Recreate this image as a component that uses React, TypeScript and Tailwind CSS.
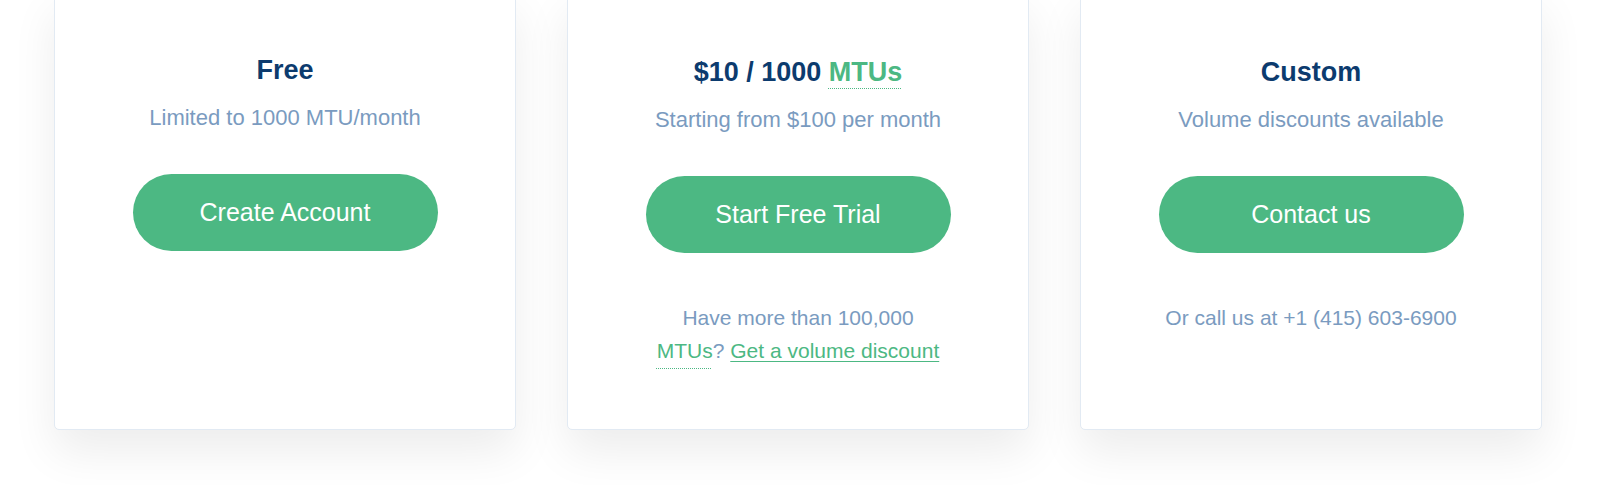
import React from "react";

const font = { fontFamily: '"Liberation Sans", Arial, sans-serif' };

function Button({ label }: { label: string }) {
  return (
    <button className="mt-[40px] flex h-[77px] w-[305px] items-center justify-center rounded-full bg-[#4cb883] text-[25px] text-white">
      {label}
    </button>
  );
}

function Card({ children, pad }: { children: React.ReactNode; pad: string }) {
  return (
    <div
      className={`flex h-[440px] w-[462px] flex-col items-center rounded-[5px] border border-[#e2eaf3] bg-white shadow-[0_22px_45px_rgba(0,0,0,0.075)] ${pad}`}
    >
      {children}
    </div>
  );
}

export default function App() {
  return (
    <div className="h-[485px] w-[1600px] overflow-hidden bg-white" style={font}>
      <div className="-mt-[10px] flex gap-[51px] pl-[54px]">
        <Card pad="pt-[61px]">
          <h2 className="h-[36px] text-[27px] font-bold leading-[36px] text-[#0c3b6e]">Free</h2>
          <p className="mt-[14px] text-[22px] leading-[32px] text-[#7a9bc0]">Limited to 1000 MTU/month</p>
          <Button label="Create Account" />
        </Card>
        <Card pad="pt-[63px]">
          <h2 className="h-[36px] text-[27px] font-bold leading-[36px] text-[#0c3b6e]">
            $10 / 1000{" "}
            <span className="font-semibold text-[#4cb883] underline decoration-[#4cb883] decoration-dotted decoration-1 underline-offset-[7px]">
              MTUs
            </span>
          </h2>
          <p className="mt-[14px] text-[22px] leading-[32px] text-[#7a9bc0]">Starting from $100 per month</p>
          <Button label="Start Free Trial" />
          <p className="mt-[48px] w-[300px] text-center text-[21px] leading-[33px] text-[#7a9bc0]">
            Have more than 100,000{" "}
            <span className="text-[#4cb883] underline decoration-[#4cb883] decoration-dotted decoration-1 underline-offset-[10px]">
              MTUs
            </span>
            ?{" "}
            <a className="text-[#4cb883] underline decoration-[#4cb883] decoration-1 underline-offset-[3px]">
              Get a volume discount
            </a>
          </p>
        </Card>
        <Card pad="pt-[63px]">
          <h2 className="h-[36px] text-[27px] font-bold leading-[36px] text-[#0c3b6e]">Custom</h2>
          <p className="mt-[14px] text-[22px] leading-[32px] text-[#7a9bc0]">Volume discounts available</p>
          <Button label="Contact us" />
          <p className="mt-[48px] text-[21px] leading-[33px] text-[#7a9bc0]">Or call us at +1 (415) 603-6900</p>
        </Card>
      </div>
    </div>
  );
}
